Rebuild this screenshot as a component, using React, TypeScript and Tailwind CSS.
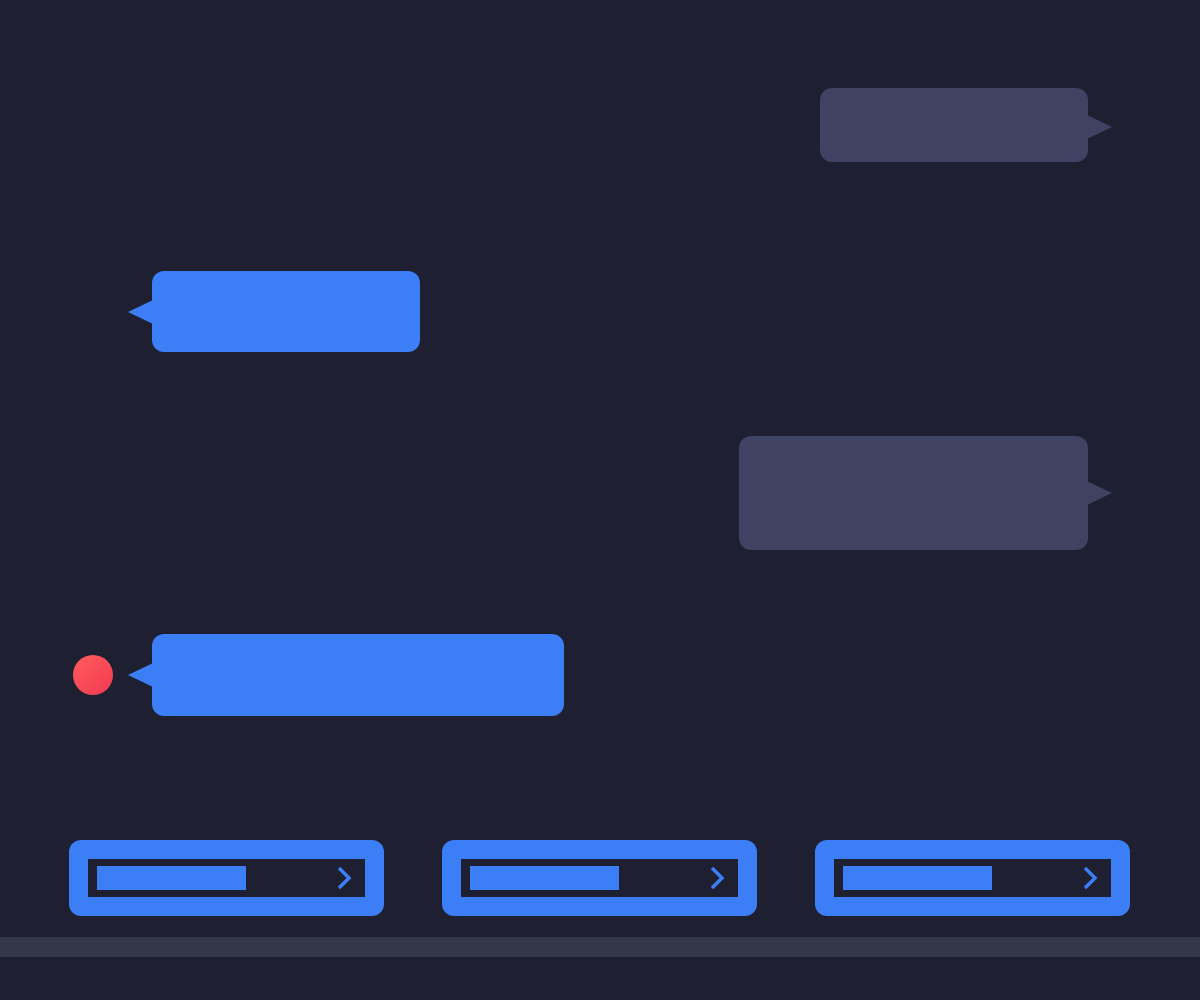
import React from "react";

type BubbleProps = {
  side: "left" | "right";
  width: number;
  height: number;
  dot?: boolean;
  tailOffset?: number;
};

function Tail({ side, color, offset = 0 }: { side: "left" | "right"; color: string; offset?: number }) {
  return (
    <svg
      width="25"
      height="24"
      viewBox="0 0 25 24"
      className="shrink-0"
      style={{ marginTop: offset * 2 }}
      aria-hidden
    >
      {side === "left" ? (
        <polygon points="25,0 0,12 25,24" fill={color} />
      ) : (
        <polygon points="0,0 25,12 0,24" fill={color} />
      )}
    </svg>
  );
}

function Bubble({ side, width, height, dot, tailOffset }: BubbleProps) {
  if (side === "left") {
    return (
      <div className="flex items-center pl-[73px]">
        <div className={dot ? "mr-[15px] h-10 w-10 rounded-full bg-gradient-to-br from-[#ff5c5c] to-[#f23752]" : "mr-[15px] h-10 w-10"} />
        <Tail side="left" color="#3b7ef6" />
        <div
          className="-ml-px rounded-xl bg-[#3b7ef6]"
          style={{ width, height }}
        />
      </div>
    );
  }
  return (
    <div className="flex items-center justify-end pr-[88px]">
      <div className="-mr-px rounded-xl bg-[#3f4263]" style={{ width, height }} />
      <Tail side="right" color="#3f4263" offset={tailOffset} />
    </div>
  );
}

function ProgressButton() {
  return (
    <button
      type="button"
      className="flex h-[76px] w-[315px] rounded-xl bg-[#3b7ef6] p-[19px]"
    >
      <div className="flex h-full w-full items-center justify-between bg-[#1e2031] pl-[9px] pr-[12px]">
        <div className="h-6 w-[149px] bg-[#3b7ef6]" />
        <svg width="18" height="24" viewBox="0 0 18 24" fill="none" aria-hidden>
          <polyline
            points="4,2 14,12 4,22"
            stroke="#3b7ef6"
            strokeWidth="3.5"
            strokeLinejoin="miter"
          />
        </svg>
      </div>
    </button>
  );
}

export default function App() {
  return (
    <div className="flex h-[1000px] w-[1200px] flex-col bg-[#1e2031] font-['Liberation_Sans',sans-serif]">
      <div className="mt-[88px]">
        <Bubble side="right" width={268} height={74} tailOffset={2} />
      </div>
      <div className="mt-[109px]">
        <Bubble side="left" width={268} height={81} />
      </div>
      <div className="mt-[84px]">
        <Bubble side="right" width={349} height={114} />
      </div>
      <div className="mt-[84px]">
        <Bubble side="left" width={412} height={82} dot />
      </div>
      <div className="mt-[124px] flex gap-[58px] px-[69px]">
        <ProgressButton />
        <ProgressButton />
        <ProgressButton />
      </div>
      <div className="mt-[21px] h-5 bg-[#343749]" />
    </div>
  );
}
